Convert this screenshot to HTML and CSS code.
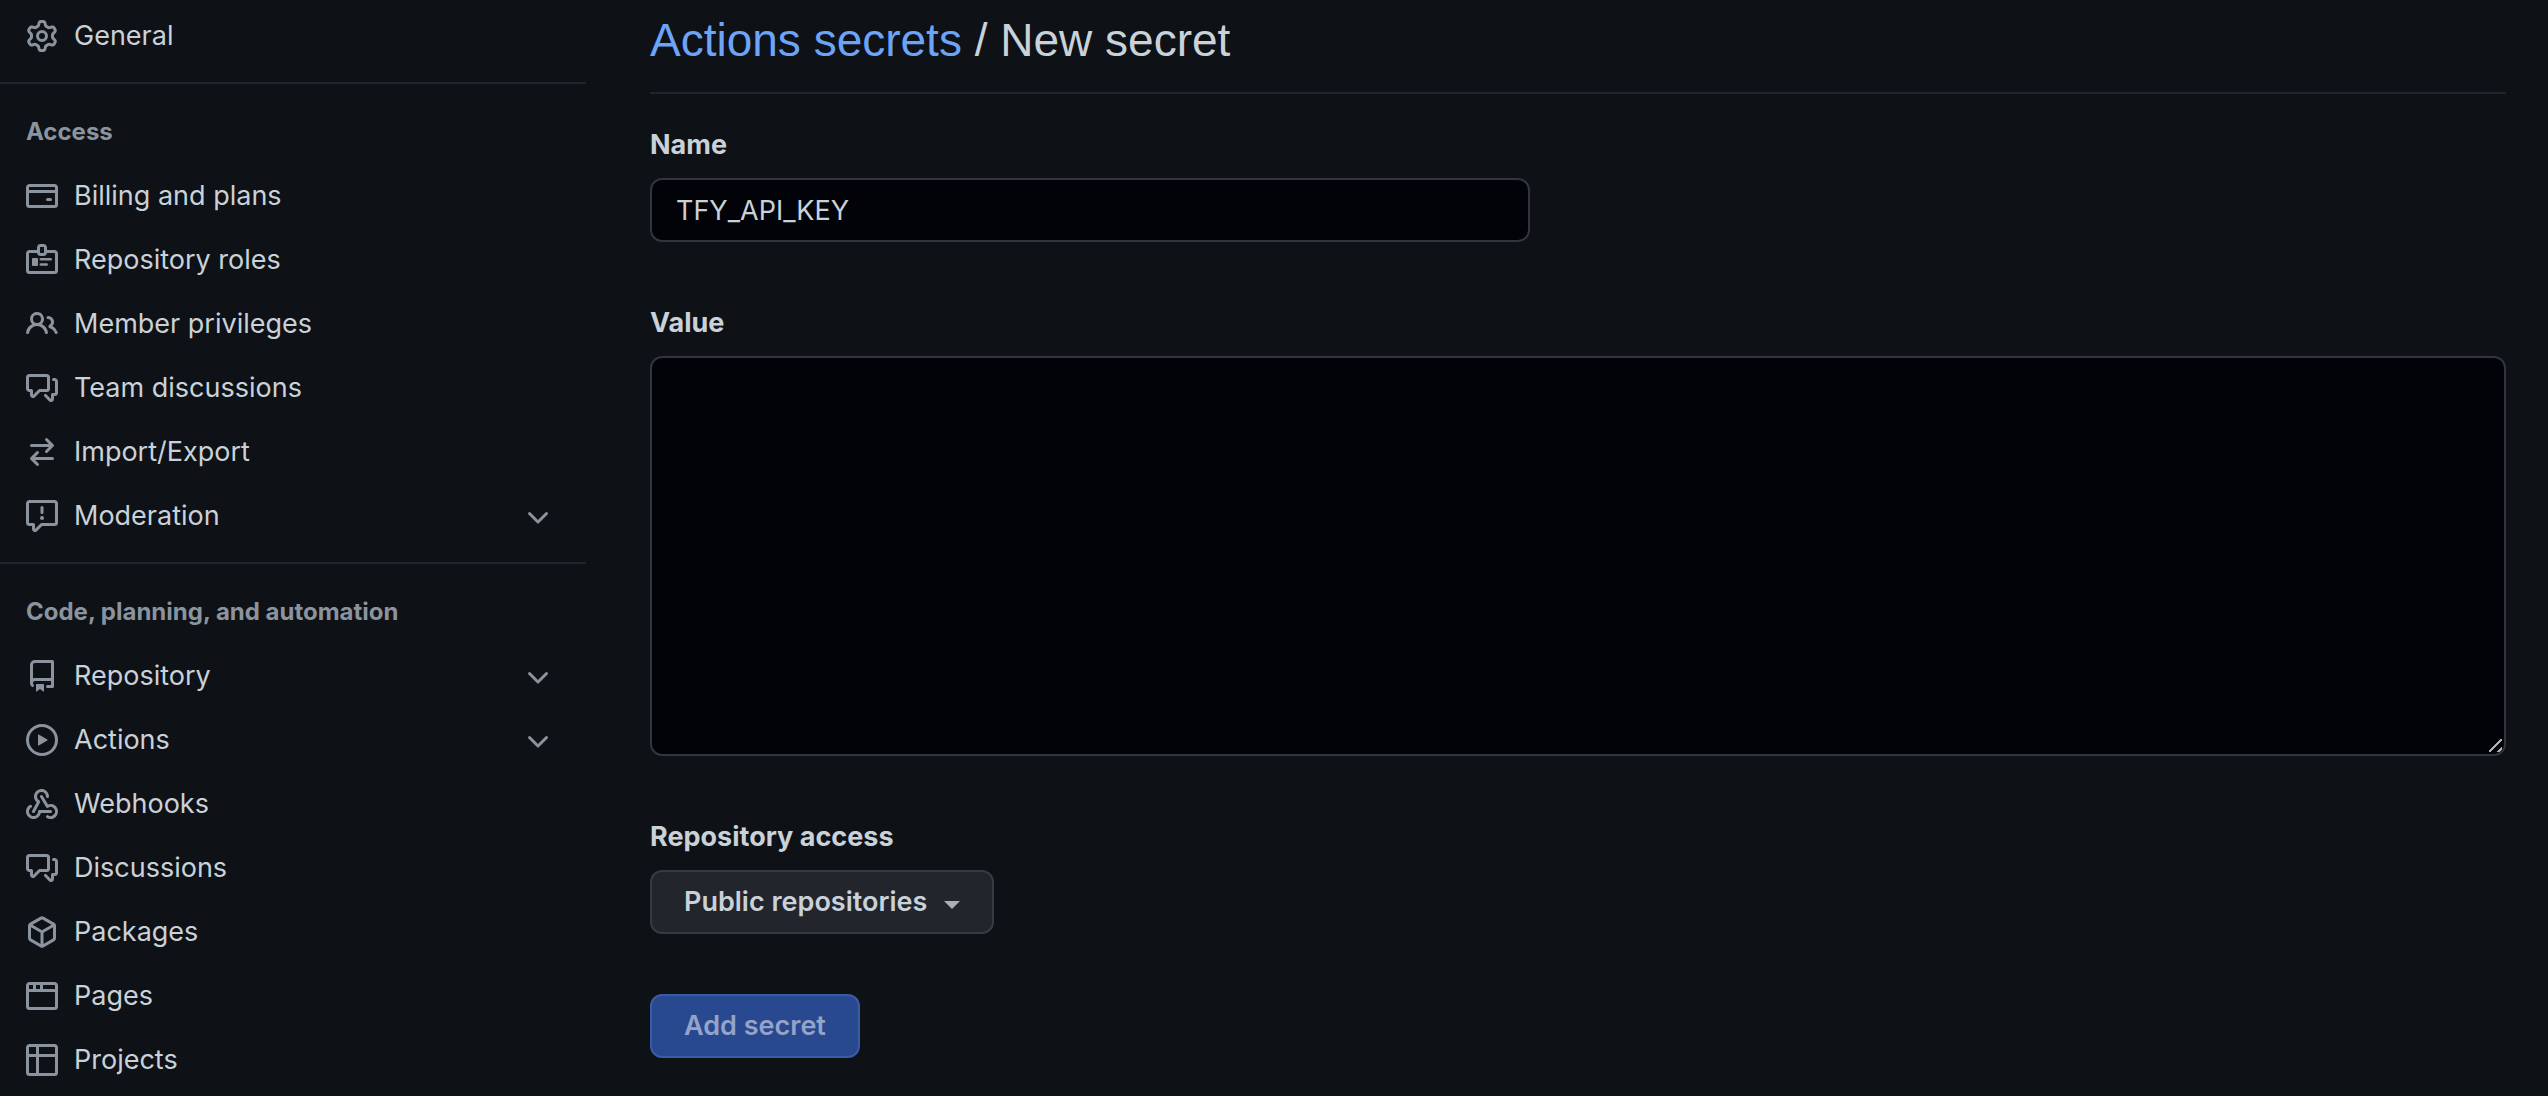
FILE: index.html
```html
<!DOCTYPE html>
<html lang="en">
<head>
<meta charset="utf-8">
<title>New secret</title>
<link rel="stylesheet" href="styles.css">
</head>
<body>
<svg class="sprite" aria-hidden="true">
  <symbol id="gear" viewBox="0 0 16 16"><path fill-rule="evenodd" d="M7.429 1.525a6.593 6.593 0 011.142 0c.036.003.108.036.137.146l.289 1.105c.147.56.55.967.997 1.189.174.086.341.183.501.29.417.278.97.423 1.53.27l1.102-.303c.11-.03.175.016.195.046.219.31.41.641.573.989.014.031.022.11-.059.19l-.815.806c-.411.406-.562.957-.53 1.456a4.588 4.588 0 010 .582c-.032.499.119 1.05.53 1.456l.815.806c.08.08.073.159.059.19a6.494 6.494 0 01-.573.99c-.02.029-.086.074-.195.045l-1.103-.303c-.559-.153-1.112-.008-1.529.27-.16.107-.327.204-.5.29-.449.222-.851.628-.998 1.189l-.289 1.105c-.029.11-.101.143-.137.146a6.613 6.613 0 01-1.142 0c-.036-.003-.108-.037-.137-.146l-.289-1.105c-.147-.56-.55-.967-.997-1.189a4.502 4.502 0 01-.501-.29c-.417-.278-.97-.423-1.53-.27l-1.102.303c-.11.03-.175-.016-.195-.046a6.492 6.492 0 01-.573-.989c-.014-.031-.022-.11.059-.19l.815-.806c.411-.406.562-.957.53-1.456a4.587 4.587 0 010-.582c.032-.499-.119-1.05-.53-1.456l-.815-.806c-.08-.08-.073-.159-.059-.19a6.44 6.44 0 01.573-.99c.02-.029.086-.075.195-.045l1.103.303c.559.153 1.112.008 1.529-.27.16-.107.327-.204.5-.29.449-.222.851-.628.998-1.189l.289-1.105c.029-.11.101-.143.137-.146zM8 0c-.236 0-.47.01-.701.03-.743.065-1.29.615-1.458 1.261l-.29 1.106c-.017.066-.078.158-.211.224a5.994 5.994 0 00-.668.386c-.123.082-.233.09-.3.071L3.27 2.776c-.644-.177-1.392.02-1.82.63a7.977 7.977 0 00-.704 1.217c-.315.675-.111 1.422.363 1.891l.815.806c.05.048.098.147.088.294a6.084 6.084 0 000 .772c.01.147-.038.246-.088.294l-.815.806c-.474.469-.678 1.216-.363 1.891.2.428.436.835.704 1.218.428.609 1.176.806 1.82.63l1.103-.303c.066-.019.176-.011.299.071.213.143.436.272.668.386.133.066.194.158.212.224l.289 1.106c.169.646.715 1.196 1.458 1.26a8.094 8.094 0 001.402 0c.743-.064 1.29-.614 1.458-1.26l.29-1.106c.017-.066.078-.158.211-.224a5.98 5.98 0 00.668-.386c.123-.082.233-.09.3-.071l1.102.302c.644.177 1.392-.02 1.82-.63.268-.382.505-.789.704-1.217.315-.675.111-1.422-.364-1.891l-.814-.806c-.05-.048-.098-.147-.088-.294a6.1 6.1 0 000-.772c-.01-.147.039-.246.088-.294l.814-.806c.475-.469.679-1.216.364-1.891a7.992 7.992 0 00-.704-1.218c-.428-.609-1.176-.806-1.82-.63l-1.103.303c-.066.019-.176.011-.299-.071a5.991 5.991 0 00-.668-.386c-.133-.066-.194-.158-.212-.224L10.16 1.29C9.99.645 9.444.095 8.701.031A8.094 8.094 0 008 0zm1.5 8a1.5 1.5 0 11-3 0 1.5 1.5 0 013 0zM11 8a3 3 0 11-6 0 3 3 0 016 0z"/></symbol>
  <symbol id="card" viewBox="0 0 16 16"><path d="M10.75 9a.75.75 0 000 1.5h1.5a.75.75 0 000-1.5h-1.5z"/><path fill-rule="evenodd" d="M0 3.75C0 2.784.784 2 1.75 2h12.5c.966 0 1.75.784 1.75 1.75v8.5A1.75 1.75 0 0114.25 14H1.75A1.75 1.75 0 010 12.25v-8.5zm14.5 0V5h-13V3.75a.25.25 0 01.25-.25h12.5a.25.25 0 01.25.25zm0 2.75h-13v5.75c0 .138.112.25.25.25h12.5a.25.25 0 00.25-.25V6.5z"/></symbol>
  <symbol id="badge" viewBox="0 0 16 16"><path d="M3 7.5a.5.5 0 01.5-.5h2a.5.5 0 01.5.5v3a.5.5 0 01-.5.5h-2a.5.5 0 01-.5-.5v-3zM6.75 7.65a.65.65 0 01.65-.65h4.95a.65.65 0 010 1.3H7.4a.65.65 0 01-.65-.65zM7.4 9.6a.65.65 0 000 1.3h2.95a.65.65 0 000-1.3H7.4z"/><path fill-rule="evenodd" d="M7.25 0h1.5c.966 0 1.75.784 1.75 1.75V3h3.75c.966 0 1.75.784 1.75 1.75v8.5A1.75 1.75 0 0114.25 15H1.75A1.75 1.75 0 010 13.25v-8.5C0 3.784.784 3 1.75 3H5.5V1.75C5.5.784 6.284 0 7.25 0zm3.232 4.5A1.75 1.75 0 018.75 6h-1.5a1.75 1.75 0 01-1.732-1.5H1.75a.25.25 0 00-.25.25v8.5c0 .138.112.25.25.25h12.5a.25.25 0 00.25-.25v-8.5a.25.25 0 00-.25-.25h-3.768zM7 1.75a.25.25 0 01.25-.25h1.5a.25.25 0 01.25.25v2.5a.25.25 0 01-.25.25h-1.5A.25.25 0 017 4.25v-2.5z"/></symbol>
  <symbol id="people" viewBox="0 0 16 16"><path fill-rule="evenodd" d="M5.5 3.5a2 2 0 100 4 2 2 0 000-4zM2 5.5a3.5 3.5 0 115.898 2.549 5.507 5.507 0 013.034 4.084.75.75 0 11-1.482.235 4.001 4.001 0 00-7.9 0 .75.75 0 01-1.482-.236A5.507 5.507 0 013.102 8.05 3.49 3.49 0 012 5.5zM11 4a.75.75 0 100 1.5 1.5 1.5 0 01.666 2.844.75.75 0 00-.416.672v.352a.75.75 0 00.574.73c1.2.289 2.162 1.2 2.522 2.372a.75.75 0 101.434-.44 5.01 5.01 0 00-2.56-3.012A3 3 0 0011 4z"/></symbol>
  <symbol id="discussion" viewBox="0 0 16 16"><path fill-rule="evenodd" d="M1.5 2.75a.25.25 0 01.25-.25h8.5a.25.25 0 01.25.25v5.5a.25.25 0 01-.25.25h-3.5a.75.75 0 00-.53.22L3.5 11.44V9.25a.75.75 0 00-.75-.75h-1a.25.25 0 01-.25-.25v-5.5zM1.75 1A1.75 1.75 0 000 2.75v5.5C0 9.216.784 10 1.75 10H2v1.543a1.457 1.457 0 002.487 1.03L7.061 10h3.189A1.75 1.75 0 0012 8.25v-5.5A1.75 1.75 0 0010.25 1h-8.5zM14.5 4.75a.25.25 0 00-.25-.25h-.5a.75.75 0 110-1.5h.5c.966 0 1.75.784 1.75 1.75v5.5A1.75 1.75 0 0114.25 12H14v1.543a1.457 1.457 0 01-2.487 1.03L9.22 12.28a.75.75 0 111.06-1.06l2.22 2.22v-2.19a.75.75 0 01.75-.75h1a.25.25 0 00.25-.25v-5.5z"/></symbol>
  <symbol id="switch" viewBox="0 0 16 16"><path fill-rule="evenodd" d="M5.22 14.78a.75.75 0 001.06-1.06L4.56 12h8.69a.75.75 0 000-1.5H4.56l1.72-1.72a.75.75 0 00-1.06-1.06l-3 3a.75.75 0 000 1.06l3 3zm5.56-6.5a.75.75 0 11-1.06-1.06l1.72-1.72H2.75a.75.75 0 010-1.5h8.69L9.72 2.28a.75.75 0 011.06-1.06l3 3a.75.75 0 010 1.06l-3 3z"/></symbol>
  <symbol id="report" viewBox="0 0 16 16"><path fill-rule="evenodd" d="M0 1.75C0 .784.784 0 1.75 0h12.5C15.216 0 16 .784 16 1.75v9.5A1.75 1.75 0 0114.25 13H8.06l-2.573 2.573A1.457 1.457 0 013 14.543V13H1.75A1.75 1.75 0 010 11.25v-9.5zm1.75-.25a.25.25 0 00-.25.25v9.5c0 .138.112.25.25.25h2a.75.75 0 01.75.75v2.19l2.72-2.72a.75.75 0 01.53-.22h6.5a.25.25 0 00.25-.25v-9.5a.25.25 0 00-.25-.25H1.75zM9 9a1 1 0 11-2 0 1 1 0 012 0zm-.25-5.25a.75.75 0 00-1.5 0v2.5a.75.75 0 001.5 0v-2.5z"/></symbol>
  <symbol id="repo" viewBox="0 0 16 16"><path fill-rule="evenodd" d="M2 2.5A2.5 2.5 0 014.5 0h8.75a.75.75 0 01.75.75v12.5a.75.75 0 01-.75.75h-2.5a.75.75 0 110-1.5h1.75v-2h-8a1 1 0 00-.714 1.7.75.75 0 01-1.072 1.05A2.495 2.495 0 012 11.5v-9zm10.5-1V9h-8c-.356 0-.694.074-1 .208V2.5a1 1 0 011-1h8zM5 12.25v3.25a.25.25 0 00.4.2l1.45-1.087a.25.25 0 01.3 0L8.6 15.7a.25.25 0 00.4-.2v-3.25a.25.25 0 00-.25-.25h-3.5a.25.25 0 00-.25.25z"/></symbol>
  <symbol id="play" viewBox="0 0 16 16"><path fill-rule="evenodd" d="M1.5 8a6.5 6.5 0 1113 0 6.5 6.5 0 01-13 0zM8 0a8 8 0 100 16A8 8 0 008 0zM6.379 5.227A.25.25 0 006 5.442v5.117a.25.25 0 00.379.214l4.264-2.559a.25.25 0 000-.428L6.379 5.227z"/></symbol>
  <symbol id="webhook" viewBox="0 0 16 16"><path d="M5.5 4.25a2.25 2.25 0 014.5 0 .75.75 0 001.5 0 3.75 3.75 0 10-6.14 2.889l-2.272 4.258a.75.75 0 001.324.706L7 7.25a.75.75 0 00-.309-1.015A2.25 2.25 0 015.5 4.25z"/><path d="M7.364 3.607a.75.75 0 011.03.257l2.608 4.349a3.75 3.75 0 11-.628 6.785.75.75 0 01.752-1.299 2.25 2.25 0 10-.033-3.88.75.75 0 01-1.03-.256L7.107 4.636a.75.75 0 01.257-1.03z"/><path d="M2.9 8.776A.75.75 0 012.625 9.8 2.25 2.25 0 106 11.75a.75.75 0 01.75-.751h5.5a.75.75 0 010 1.5H7.425a3.751 3.751 0 11-5.55-3.998.75.75 0 011.024.274z"/></symbol>
  <symbol id="package" viewBox="0 0 16 16"><path fill-rule="evenodd" d="M8.878.392a1.75 1.75 0 00-1.756 0l-5.25 3.045A1.75 1.75 0 001 4.951v6.098c0 .624.332 1.2.872 1.514l5.25 3.045a1.75 1.75 0 001.756 0l5.25-3.045c.54-.313.872-.89.872-1.514V4.951c0-.624-.332-1.2-.872-1.514L8.878.392zM7.875 1.69a.25.25 0 01.25 0l4.63 2.685L8 7.133 3.245 4.375l4.63-2.685zM2.5 5.677v5.372c0 .09.047.171.125.216l4.625 2.683V8.432L2.5 5.677zm6.25 8.271l4.625-2.683a.25.25 0 00.125-.216V5.677L8.75 8.432v5.516z"/></symbol>
  <symbol id="browser" viewBox="0 0 16 16"><path fill-rule="evenodd" d="M0 2.75C0 1.784.784 1 1.75 1h12.5c.966 0 1.75.784 1.75 1.75v10.5A1.75 1.75 0 0114.25 15H1.75A1.75 1.75 0 010 13.25V2.75zm1.75-.25a.25.25 0 00-.25.25V4.5h2v-2H1.75zM5 2.5v2h2v-2H5zm3.5 0v2h6V2.75a.25.25 0 00-.25-.25H8.5zm6 3.5h-13v7.25c0 .138.112.25.25.25h12.5a.25.25 0 00.25-.25V6z"/></symbol>
  <symbol id="table" viewBox="0 0 16 16"><path fill-rule="evenodd" d="M0 1.75C0 .784.784 0 1.75 0h12.5C15.216 0 16 .784 16 1.75v12.5A1.75 1.75 0 0114.25 16H1.75A1.75 1.75 0 010 14.25V1.75zM1.5 6.5v7.75c0 .138.112.25.25.25H5v-8H1.5zM5 5H1.5V1.75a.25.25 0 01.25-.25H5V5zm1.5 1.5v8h7.75a.25.25 0 00.25-.25V6.5h-8zm8-1.5h-8V1.5h7.75a.25.25 0 01.25.25V5z"/></symbol>
  <symbol id="chevron" viewBox="0 0 16 16"><path fill-rule="evenodd" d="M12.78 6.22a.75.75 0 010 1.06l-4.25 4.25a.75.75 0 01-1.06 0L3.22 7.28a.75.75 0 011.06-1.06L8 9.94l3.72-3.72a.75.75 0 011.06 0z"/></symbol>
</svg>

<div class="layout">
  <nav class="sidebar" aria-label="Settings">
    <ul class="nav-group">
      <li><a class="nav-item" href="#"><svg class="icon"><use href="#gear"/></svg><span>General</span></a></li>
    </ul>
    <section class="nav-section">
      <h2 class="nav-heading">Access</h2>
      <ul class="nav-group">
        <li><a class="nav-item" href="#"><svg class="icon"><use href="#card"/></svg><span>Billing and plans</span></a></li>
        <li><a class="nav-item" href="#"><svg class="icon"><use href="#badge"/></svg><span>Repository roles</span></a></li>
        <li><a class="nav-item" href="#"><svg class="icon"><use href="#people"/></svg><span>Member privileges</span></a></li>
        <li><a class="nav-item" href="#"><svg class="icon"><use href="#discussion"/></svg><span>Team discussions</span></a></li>
        <li><a class="nav-item" href="#"><svg class="icon"><use href="#switch"/></svg><span>Import/Export</span></a></li>
        <li><button class="nav-item" type="button" aria-expanded="false"><svg class="icon"><use href="#report"/></svg><span>Moderation</span><svg class="icon chevron"><use href="#chevron"/></svg></button></li>
      </ul>
    </section>
    <section class="nav-section">
      <h2 class="nav-heading">Code, planning, and automation</h2>
      <ul class="nav-group">
        <li><button class="nav-item" type="button" aria-expanded="false"><svg class="icon"><use href="#repo"/></svg><span>Repository</span><svg class="icon chevron"><use href="#chevron"/></svg></button></li>
        <li><button class="nav-item" type="button" aria-expanded="false"><svg class="icon"><use href="#play"/></svg><span>Actions</span><svg class="icon chevron"><use href="#chevron"/></svg></button></li>
        <li><a class="nav-item" href="#"><svg class="icon"><use href="#webhook"/></svg><span>Webhooks</span></a></li>
        <li><a class="nav-item" href="#"><svg class="icon"><use href="#discussion"/></svg><span>Discussions</span></a></li>
        <li><a class="nav-item" href="#"><svg class="icon"><use href="#package"/></svg><span>Packages</span></a></li>
        <li><a class="nav-item" href="#"><svg class="icon"><use href="#browser"/></svg><span>Pages</span></a></li>
        <li><a class="nav-item" href="#"><svg class="icon"><use href="#table"/></svg><span>Projects</span></a></li>
      </ul>
    </section>
  </nav>

  <main class="content">
    <h1 class="title"><a href="#">Actions secrets</a> / New secret</h1>
    <form class="form">
      <div class="field">
        <label for="name">Name</label>
        <input class="control name-input" id="name" type="text" value="TFY_API_KEY">
      </div>
      <div class="field">
        <label for="value">Value</label>
        <textarea class="control value-input" id="value"></textarea>
      </div>
      <div class="field">
        <label for="access">Repository access</label>
        <div class="select-wrap">
          <select class="button" id="access">
            <option>Public repositories</option>
          </select>
        </div>
      </div>
      <button class="button button-primary" type="submit" disabled>Add secret</button>
    </form>
  </main>
</div>
</body>
</html>
```
FILE: styles.css
```css
* {
  box-sizing: border-box;
}

body {
  margin: 0;
  background: #0e1116;
  color: #c9d1d9;
  font: 400 27px/42px Inter, "Liberation Sans", sans-serif;
}

button,
input,
select,
textarea {
  font: inherit;
  color: inherit;
}

.sprite {
  display: none;
}

.layout {
  display: grid;
  grid-template-columns: 586px minmax(0, 1fr);
  column-gap: 64px;
  padding: 4px 42px 0 0;
}

/* Sidebar */

.nav-group {
  margin: 0;
  padding: 0;
  list-style: none;
}

.nav-section {
  margin-top: 14px;
  padding-top: 16px;
  border-top: 2px solid #21262d;
}

.nav-heading {
  margin: 0;
  padding: 0 26px;
  color: #8b949e;
  font-size: 24px;
  font-weight: 700;
  line-height: 64px;
}

.nav-item {
  display: flex;
  align-items: center;
  gap: 16px;
  width: 100%;
  height: 64px;
  padding: 0 32px 0 26px;
  border: 0;
  background: none;
  color: inherit;
  text-align: left;
  text-decoration: none;
}

.icon {
  flex: none;
  width: 32px;
  height: 32px;
  fill: #8b949e;
}

.chevron {
  margin-left: auto;
}

/* Main column */

.title {
  margin: 0 0 30px;
  padding-bottom: 16px;
  border-bottom: 2px solid #21262d;
  font-family: "Liberation Sans", Arial, sans-serif;
  font-size: 46px;
  font-weight: 400;
  line-height: 72px;
}

.title a {
  color: #6ca4f8;
  text-decoration: none;
}

.form {
  display: flex;
  flex-direction: column;
  align-items: flex-start;
  gap: 60px;
}

.field {
  display: flex;
  flex-direction: column;
  align-items: flex-start;
  gap: 12px;
  width: 100%;
}

.field label {
  font-weight: 700;
}

.control {
  display: block;
  max-width: 100%;
  padding: 9px 24px;
  border: 2px solid #30363d;
  border-radius: 12px;
  background: #010308;
  outline: 0;
}

.name-input {
  width: 880px;
  height: 64px;
}

.value-input {
  width: 100%;
  height: 400px;
  resize: vertical;
}

.value-input::-webkit-resizer {
  background: linear-gradient(315deg, transparent 2px, #b0b0b0 2px, #b0b0b0 4px, transparent 4px, transparent 8px, #b0b0b0 8px, #b0b0b0 10px, transparent 10px) 0 0 / 13px 13px no-repeat;
}

.button {
  height: 64px;
  padding: 0 32px;
  border: 2px solid #363b42;
  border-radius: 12px;
  background: #22262c;
  font-weight: 600;
  line-height: 42px;
  appearance: none;
}

.select-wrap {
  position: relative;
}

.select-wrap .button {
  padding-right: 64px;
}

.select-wrap::after {
  content: "";
  position: absolute;
  top: 31px;
  right: 34px;
  border: 8px solid transparent;
  border-top-color: #a9b0b8;
  border-bottom: 0;
  pointer-events: none;
}

.button-primary {
  border-color: #3a5ba5;
  background: #284890;
  color: #94a4c8;
}
```
